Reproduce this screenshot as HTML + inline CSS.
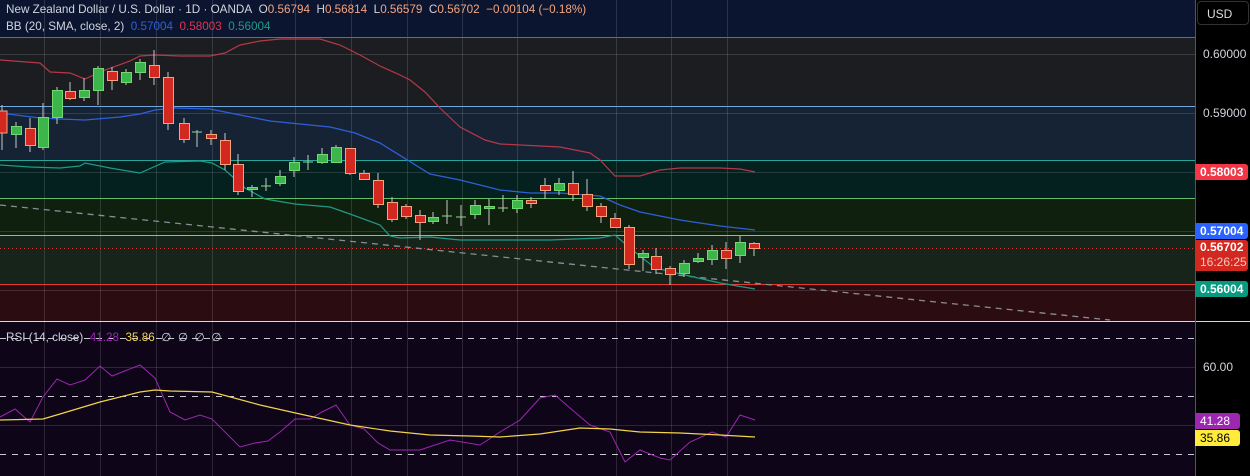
<!DOCTYPE html><html><head><meta charset="utf-8"><style>
body{margin:0;width:1250px;height:476px;overflow:hidden;background:#000;font-family:"Liberation Sans",sans-serif}
svg{position:absolute;left:0;top:0}
.t{position:absolute;font-size:11.7px;color:#d1d4dc;white-space:nowrap}
.lab{position:absolute;left:1195px;width:53px;height:16px;font-size:12px;font-weight:bold;color:#fff;line-height:16px;padding-left:5px;box-sizing:border-box;border-radius:0 3px 3px 0}
</style></head><body>
<svg width="1250" height="476">
<rect x="0" y="0" width="1195" height="37" fill="#0b1530"/>
<rect x="0" y="37" width="1195" height="69" fill="#1c1d21"/>
<rect x="0" y="106" width="1195" height="54" fill="#162334"/>
<rect x="0" y="160" width="1195" height="38" fill="#04201f"/>
<rect x="0" y="198" width="1195" height="37" fill="#10200f"/>
<rect x="0" y="235" width="1195" height="49" fill="#16241a"/>
<rect x="0" y="284" width="1195" height="37" fill="#2b0c11"/>
<rect x="0" y="322" width="1195" height="154" fill="#0e0519"/>
<g stroke="#ffffff" stroke-opacity="0.13" stroke-width="1">
<path d="M44.5 0V476M100.5 0V476M156.5 0V476M212.5 0V476M295.5 0V476M351.5 0V476M407.5 0V476M462.5 0V476M517.5 0V476M616.5 0V476M671.5 0V476M727.5 0V476"/>
<path d="M0 54.5H1195M0 113.5H1195M0 172.5H1195M0 231.5H1195M0 290.5H1195M0 367.5H1195M0 425.5H1195"/>
</g>
<path d="M0 37.5H1195" stroke="#6a6d78"/>
<path d="M0 106.5H1195" stroke="#6fa8dc"/>
<path d="M0 160.5H1195" stroke="#26a69a"/>
<path d="M0 198.5H1195" stroke="#66bb6a"/>
<path d="M0 235.5H1195" stroke="#81c784"/>
<path d="M0 284.5H1195" stroke="#e53935"/>
<path d="M0 248.5H1195" stroke="#e53935" stroke-dasharray="1 3"/>
<path d="M0 205L1110 320" stroke="#8a8d96" stroke-dasharray="6 5" stroke-width="1.3"/>
<path d="M0 321.5H1250" stroke="#d8d8d8"/>
<path d="M1195.5 0V476" stroke="#555"/>
<g stroke="#c9cacf" stroke-dasharray="6 6"><path d="M0 338.5H1195M0 396.5H1195M0 454.5H1195"/></g>
<polyline fill="none" stroke="#b5384a" stroke-width="1.2" points="0,60 40,63 50,72 70,73 85,79 105,70 130,61 140,56 155,55 180,56 210,56 225,53 240,45 260,41 280,39 320,39 340,45 360,55 380,66 400,75 410,80 425,92 440,108 460,127 485,140 500,144 560,147 590,153 600,160 615,176 640,176 660,170 680,168 720,168 740,169 755,172"/>
<polyline fill="none" stroke="#2f5fd8" stroke-width="1.3" points="0,113 40,118 60,119 85,120 120,117 140,114 155,110 175,108 210,109 240,115 270,121 300,124 330,127 355,133 380,143 430,174 460,180 500,190 530,193 560,193 600,196 620,205 640,212 680,220 720,226 755,230"/>
<polyline fill="none" stroke="#1f9a86" stroke-width="1.2" points="0,165 30,167 60,168 80,166 85,163 110,168 140,173 165,162 200,161 212,163 225,170 245,188 265,199 295,204 330,207 350,214 380,225 390,236 400,238 430,237 460,240 550,240 600,238 615,235 630,248 655,268 685,275 720,283 755,289"/>
<polyline fill="none" stroke="#9c27b0" stroke-width="1" points="0,417 15,409 30,422 43,397 57,379 70,385 85,380 100,366 112,376 140,365 155,378 170,412 185,420 200,415 212,419 240,447 255,443 268,441 280,432 295,419 310,419 322,412 336,405 350,425 364,429 378,443 390,450 420,450 450,440 480,445 500,432 520,420 540,398 555,395 570,408 590,425 610,432 625,462 640,450 660,458 670,460 690,442 712,432 726,437 740,415 755,420"/>
<polyline fill="none" stroke="#f2d34a" stroke-width="1.2" points="0,420 43,419 60,414 100,402 140,392 155,390 170,391 212,392 260,405 300,414 350,425 390,431 430,435 470,436 500,437 540,434 580,428 610,429 640,432 680,433 720,435 755,437"/>
</svg>
<svg width="1250" height="476"><g stroke-width="1">
<g stroke="#c8c8c8">
<path d="M2 105V150M16 122V148M30 118V152M43 103V150M57 87V124M70 82V100M84 78V101M98 66V105M112 67V90M126 69V85M140 59V80M154 50V85M168 72V130M184 118V143M197 130V147M211 130V145M225 133V170M238 154V195M252 185V197M266 178V191M280 170V186M294 157V177M308 155V170M322 148V164M336 145V163M350 148V175M364 170V180M378 173V208M392 197V222M406 204V219M420 210V240M433 212V224M447 200V224M461 205V226M475 200V219M489 199V225M503 195V212M517 195V213M531 197V208M545 178V199M559 178V195M573 171V201M587 179V211M601 203V223M615 213V228M629 225V269M643 250V271M656 248V274M670 266V285M684 260V277M698 253V263M712 245V265M726 242V269M740 236V263M754 242V256"/>
</g>
<g fill="#d32820" stroke="#f7a47e">
<rect x="-3" y="111" width="10" height="22"/><rect x="25.5" y="128.5" width="10" height="17"/><rect x="65.5" y="91.5" width="10" height="7"/><rect x="107.5" y="71.5" width="10" height="9"/><rect x="149.5" y="65.5" width="10" height="12"/><rect x="163.5" y="77.5" width="10" height="46"/><rect x="179.5" y="123.5" width="10" height="16"/><rect x="206.5" y="134.5" width="10" height="4"/><rect x="220.5" y="140.5" width="10" height="24"/><rect x="233.5" y="164.5" width="10" height="27"/><rect x="345.5" y="148.5" width="10" height="25"/><rect x="359.5" y="173.5" width="10" height="6"/><rect x="373.5" y="180.5" width="10" height="24"/><rect x="387.5" y="202.5" width="10" height="17"/><rect x="401.5" y="206.5" width="10" height="10"/><rect x="415.5" y="215.5" width="10" height="7"/><rect x="526.5" y="200.5" width="10" height="3"/><rect x="540.5" y="185.5" width="10" height="5"/><rect x="568.5" y="183.5" width="10" height="11"/><rect x="582.5" y="194.5" width="10" height="12"/><rect x="596.5" y="206.5" width="10" height="10"/><rect x="610.5" y="218.5" width="10" height="9"/><rect x="624.5" y="227.5" width="10" height="37"/><rect x="651.5" y="256.5" width="10" height="13"/><rect x="665.5" y="268.5" width="10" height="6"/><rect x="721.5" y="250.5" width="10" height="8"/><rect x="749.5" y="243.5" width="10" height="5"/>
</g>
<g fill="#3cb54a" stroke="#72d872">
<rect x="11.5" y="126.5" width="10" height="8"/><rect x="38.5" y="117.5" width="10" height="30"/><rect x="52.5" y="90.5" width="10" height="27"/><rect x="79.5" y="90.5" width="10" height="7"/><rect x="93.5" y="68.5" width="10" height="22"/><rect x="121.5" y="72.5" width="10" height="10"/><rect x="135.5" y="62.5" width="10" height="10"/><rect x="247.5" y="187.5" width="10" height="2"/><rect x="275.5" y="176.5" width="10" height="7"/><rect x="289.5" y="162.5" width="10" height="8"/><rect x="317.5" y="154.5" width="10" height="8"/><rect x="331.5" y="147.5" width="10" height="15"/><rect x="428.5" y="217.5" width="10" height="4"/><rect x="470.5" y="205.5" width="10" height="9"/><rect x="484.5" y="206.5" width="10" height="2"/><rect x="512.5" y="200.5" width="10" height="8"/><rect x="554.5" y="183.5" width="10" height="7"/><rect x="638.5" y="253.5" width="10" height="4"/><rect x="679.5" y="263.5" width="10" height="10"/><rect x="693.5" y="258.5" width="10" height="3"/><rect x="707.5" y="250.5" width="10" height="9"/><rect x="735.5" y="242.5" width="10" height="13"/>
</g>
<g stroke="#8fd88f"><path d="M192 132H202M261 186H271M303 162H313M442 216H452M456 217H466M498 208H508"/></g>
</g></svg>
<div class="t" style="left:6px;top:3px">New Zealand Dollar / U.S. Dollar · 1D · OANDA&nbsp; O<span style="color:#f7a47e">0.56794</span>&nbsp; H<span style="color:#f7a47e">0.56814</span>&nbsp; L<span style="color:#f7a47e">0.56579</span>&nbsp; C<span style="color:#f7a47e">0.56702</span>&nbsp; <span style="color:#f7a47e">−0.00104 (−0.18%)</span></div>
<div class="t" style="left:6px;top:20px">BB (20, SMA, close, 2)&nbsp; <span style="color:#2f5fd8">0.57004</span>&nbsp; <span style="color:#e0344a">0.58003</span>&nbsp; <span style="color:#1f9a86">0.56004</span></div>
<div class="t" style="left:6px;top:330px">RSI (14, close)&nbsp; <span style="color:#9c27b0">41.28</span>&nbsp; <span style="color:#f2d34a">35.86</span>&nbsp; ∅&nbsp; ∅&nbsp; ∅&nbsp; ∅</div>
<div style="position:absolute;left:1197px;top:1px;width:52px;height:24px;border:1px solid #333;border-radius:4px;color:#ddd;font-size:12px;line-height:24px;padding-left:9px;box-sizing:border-box">USD</div>
<div class="t" style="left:1203px;top:47px;font-size:12px">0.60000</div>
<div class="t" style="left:1203px;top:106px;font-size:12px">0.59000</div>
<div class="lab" style="top:164px;background:#f23645">0.58003</div>
<div class="lab" style="top:223px;background:#2962ff">0.57004</div>
<div class="lab" style="top:240px;height:31px;background:#d32820;line-height:15px">0.56702<br><span style="font-weight:normal;color:#f4c8c0">16:26:25</span></div>
<div class="lab" style="top:281px;background:#089981">0.56004</div>
<div class="t" style="left:1203px;top:360px;font-size:12px">60.00</div>
<div class="lab" style="top:413px;width:45px;background:#9c27b0;font-weight:normal">41.28</div>
<div class="lab" style="top:430px;width:45px;background:#ffeb3b;color:#000;font-weight:normal">35.86</div>
</body></html>
